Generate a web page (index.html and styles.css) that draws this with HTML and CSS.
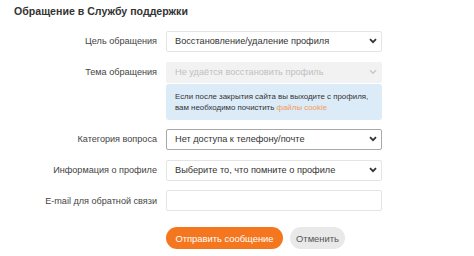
FILE: index.html
```html
<!DOCTYPE html>
<html>
<head>
    <meta charset="UTF-8">
    <title>Обращение в Службу поддержки</title>
    <link rel="stylesheet" href="styles.css">
</head>
<body>
    <h1>Обращение в Службу поддержки</h1>
    <form class="support-form">
        <label class="form-label">Цель обращения</label>
        <div class="select-wrap">
            <select class="form-select">
                <option>Восстановление/удаление профиля</option>
            </select>
            <svg class="chevron" width="8" height="6" viewBox="0 0 8 6"><path d="M1 1.2 L4 4.2 L7 1.2" fill="none" stroke="#333" stroke-width="1.8"/></svg>
        </div>

        <label class="form-label">Тема обращения</label>
        <div class="select-wrap">
            <select class="form-select" disabled>
                <option>Не удаётся восстановить профиль</option>
            </select>
            <svg class="chevron" width="8" height="6" viewBox="0 0 8 6"><path d="M1 1.2 L4 4.2 L7 1.2" fill="none" stroke="#c8c8c8" stroke-width="1.4"/></svg>
        </div>

        <div></div>
        <div class="info-box">
            Если после закрытия сайта вы выходите с профиля,<br>
            вам необходимо почистить <a href="#">файлы cookie</a>
        </div>

        <label class="form-label">Категория вопроса</label>
        <div class="select-wrap">
            <select class="form-select focused">
                <option>Нет доступа к телефону/почте</option>
            </select>
            <svg class="chevron" width="8" height="6" viewBox="0 0 8 6"><path d="M1 1.2 L4 4.2 L7 1.2" fill="none" stroke="#333" stroke-width="1.8"/></svg>
        </div>

        <label class="form-label">Информация о профиле</label>
        <div class="select-wrap">
            <select class="form-select">
                <option>Выберите то, что помните о профиле</option>
            </select>
            <svg class="chevron" width="8" height="6" viewBox="0 0 8 6"><path d="M1 1.2 L4 4.2 L7 1.2" fill="none" stroke="#333" stroke-width="1.8"/></svg>
        </div>

        <label class="form-label">E-mail для обратной связи</label>
        <input class="form-input" type="text">

        <div></div>
        <div class="button-group">
            <button type="button" class="btn-send">Отправить сообщение</button>
            <button type="button" class="btn-cancel">Отменить</button>
        </div>
    </form>
</body>
</html>
```

FILE: styles.css
```css
body {
    margin: 0;
    padding: 0 14px;
    background-color: #FFFFFF;
    font-family: "Liberation Sans", Arial, sans-serif;
    color: #333333;
}
h1 {
    font-size: 10.6px;
    font-weight: bold;
    color: #333333;
    margin: 4px 0 0 0;
    line-height: 14px;
}
.support-form {
    display: grid;
    grid-template-columns: 143px 216px;
    column-gap: 9px;
    row-gap: 10px;
    margin-top: 12px;
    align-items: center;
}
.form-label {
    font-size: 9.1px;
    color: #444444;
    text-align: right;
}
.select-wrap {
    position: relative;
    height: 21px;
}
.form-select {
    appearance: none;
    -webkit-appearance: none;
    width: 100%;
    height: 21px;
    margin: 0;
    padding: 0 8px;
    font-family: "Liberation Sans", Arial, sans-serif;
    font-size: 9.2px;
    color: #333333;
    background-color: #FFFFFF;
    border: 1px solid #e4e4e4;
    border-radius: 2px;
    box-sizing: border-box;
}
.form-select:disabled {
    background-color: #f2f2f2;
    border-color: #f2f2f2;
    color: #c0c0c0;
    opacity: 1;
}
.form-select.focused {
    border-color: #a8a8a8;
}
.chevron {
    position: absolute;
    right: 5px;
    top: 8px;
}
.info-box {
    background-color: #dcebf8;
    border-radius: 3px;
    font-size: 7.9px;
    line-height: 11px;
    color: #333333;
    padding: 7px 9px 7px 9px;
    margin-top: -8px;
    margin-bottom: -2px;
}
.info-box a {
    color: #f59a56;
    text-decoration: none;
}
.form-input {
    height: 21px;
    margin: 0;
    border: 1px solid #e4e4e4;
    border-radius: 2px;
    box-sizing: border-box;
}
.button-group {
    display: flex;
    gap: 7px;
    margin-top: 6px;
}
.btn-send {
    background-color: #f4771f;
    border: none;
    border-radius: 11px;
    color: #FFFFFF;
    font-family: "Liberation Sans", Arial, sans-serif;
    font-size: 9.4px;
    height: 22px;
    width: 117px;
    padding: 0;
}
.btn-cancel {
    background-color: #e9e9e9;
    border: none;
    border-radius: 11px;
    color: #555555;
    font-family: "Liberation Sans", Arial, sans-serif;
    font-size: 9.4px;
    height: 22px;
    width: 55px;
    padding: 0;
}
```
